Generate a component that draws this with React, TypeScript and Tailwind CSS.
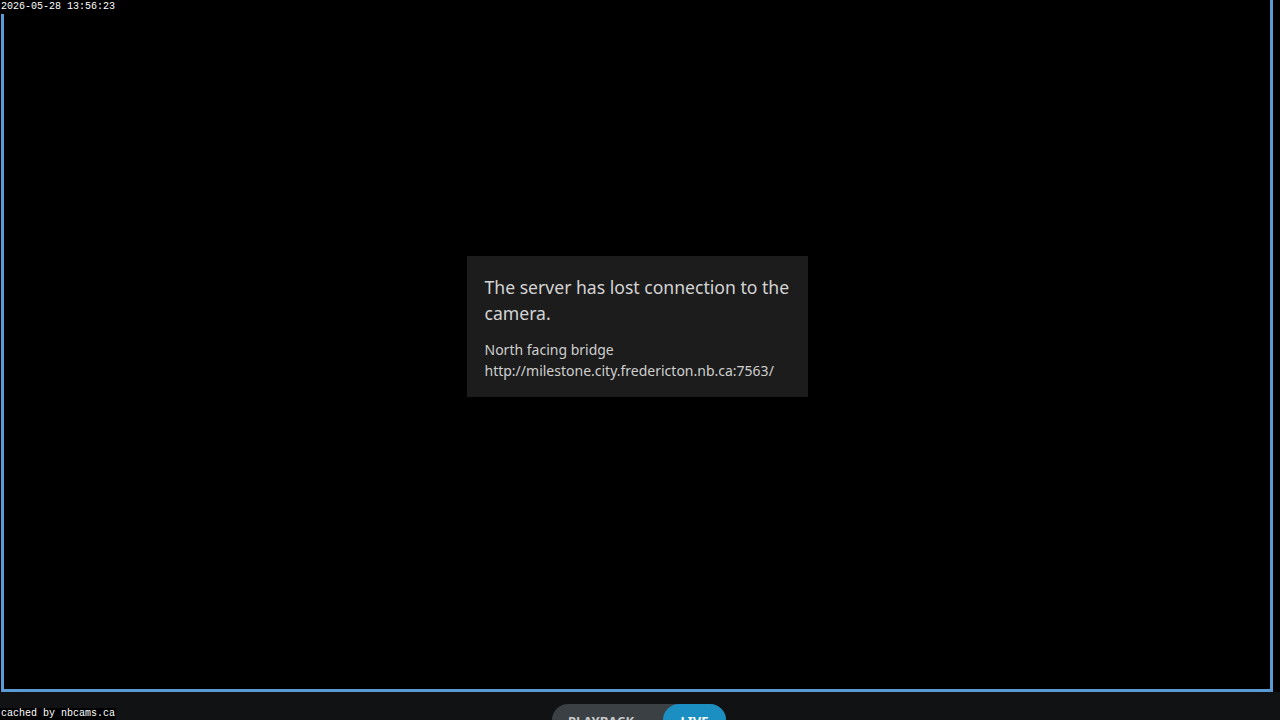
export default function App() {
  return (
    <div className="relative w-[1280px] h-[720px] overflow-hidden bg-black flex flex-col">
      {/* camera tile */}
      <div className="ml-[1px] w-[1272px] h-[692px] shrink-0 border-x-[3px] border-b-[3px] border-[#5b9bd5] flex justify-center pt-[256px]">
        <div
          className="w-[341px] h-[141px] bg-[#1c1c1c] px-[18px] pt-[18px] text-[#d4d4d4]"
          style={{ fontFamily: '"Noto Sans", "Open Sans", sans-serif' }}
        >
          <p className="text-[17.6px] leading-[26px]">
            The server has lost connection to the camera.
          </p>
          <div className="mt-[13px] text-[14px] leading-[21px] text-[#cfcfcf]">
            <p>North facing bridge</p>
            <p>http://milestone.city.fredericton.nb.ca:7563/</p>
          </div>
        </div>
      </div>

      {/* playback / live switch */}
      <div className="flex-1 bg-[#111213] flex justify-center pt-[12px]">
        <div className="ml-[-2px] flex h-[32px] rounded-full bg-[#3b4045] text-[13px] font-bold leading-[34px]" style={{ fontFamily: '"Noto Sans", sans-serif' }}>
          <span className="pl-[16px] pr-[16px] w-[111px] text-[#c8c8c8]">PLAYBACK</span>
          <span className="w-[63px] rounded-full bg-[#1c8fc2] text-center text-white">LIVE</span>
        </div>
      </div>

      {/* stamps */}
      <div className="absolute left-0 top-0 bg-black px-[1px] text-[10px] leading-[14px] text-white font-['Liberation_Mono',monospace]">
        2026-05-28 13:56:23
      </div>
      <div className="absolute left-0 bottom-0 bg-black px-[1px] text-[10px] leading-[12px] text-white font-['Liberation_Mono',monospace]">
        cached by nbcams.ca
      </div>
    </div>
  );
}
